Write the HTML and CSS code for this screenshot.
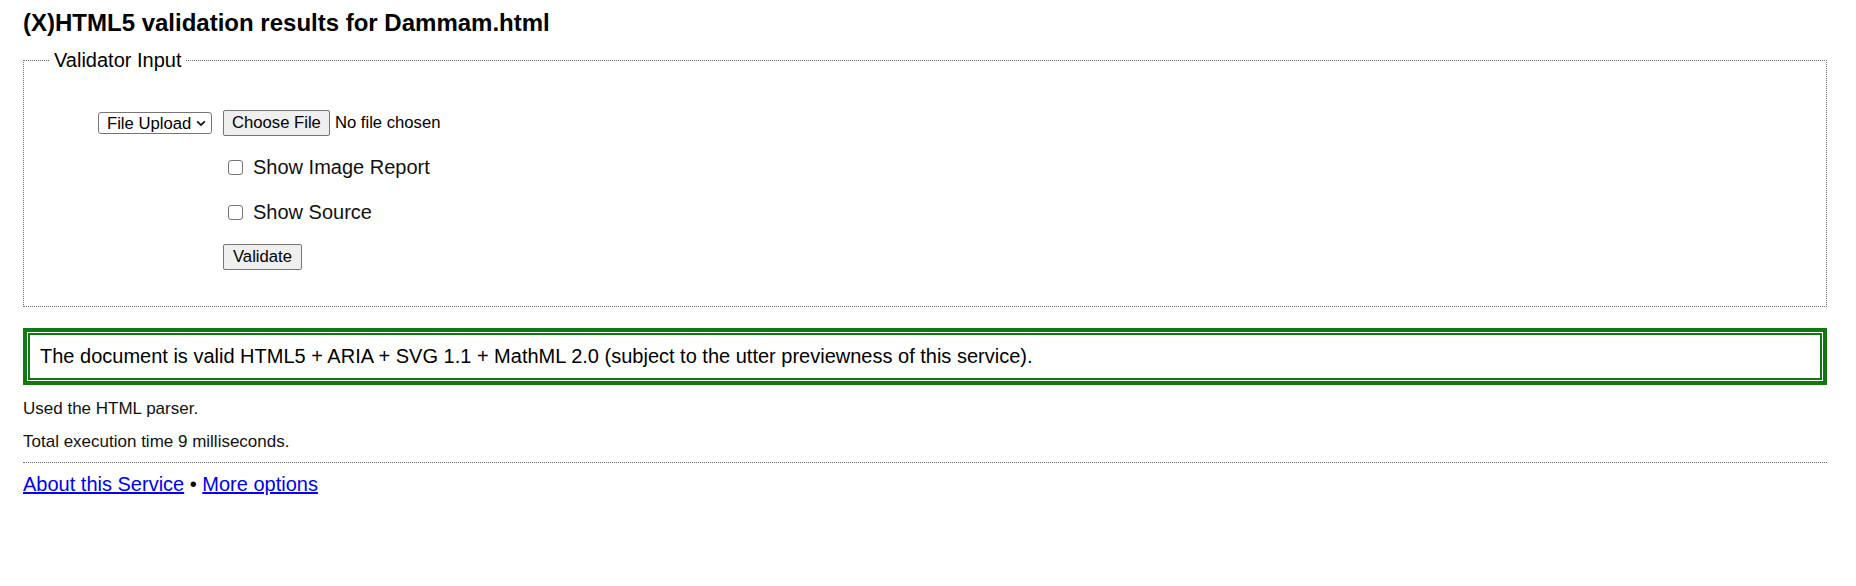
FILE: index.html
```html
<!DOCTYPE html>
<html lang="en">
<head>
<meta charset="utf-8">
<title>(X)HTML5 validation results for Dammam.html</title>
<link rel="stylesheet" href="styles.css">
</head>
<body>
<h1 class="title">(X)HTML5 validation results for Dammam.html</h1>
<form class="input-form">
  <fieldset class="fs">
    <legend class="fs-legend">Validator Input</legend>
    <div class="form-grid">
      <div class="cell-select">
        <span class="select">File Upload<svg class="chev" width="10" height="7" viewBox="0 0 10 7"><path d="M1.2 1.3 5 5.1 8.8 1.3" fill="none" stroke="#111" stroke-width="1.8"/></svg></span>
      </div>
      <div class="cell-file">
        <span class="btn">Choose File</span><span class="nofile">No file chosen</span>
      </div>
      <div class="cell-empty"></div>
      <label class="check"><span class="box"></span>Show Image Report</label>
      <div class="cell-empty"></div>
      <label class="check"><span class="box"></span>Show Source</label>
      <div class="cell-empty"></div>
      <div class="cell-btn"><span class="btn btn-validate">Validate</span></div>
    </div>
  </fieldset>
</form>
<div class="success">The document is valid HTML5 + ARIA + SVG 1.1 + MathML 2.0 (subject to the utter previewness of this service).</div>
<p class="info info-first">Used the HTML parser.</p>
<p class="info">Total execution time 9 milliseconds.</p>
<hr class="sep">
<p class="links"><a href="#">About this Service</a> • <a href="#">More options</a></p>
</body>
</html>
```
FILE: styles.css
```css
html, body {
  background: #fff;
}
body {
  margin: 0;
  padding: 9px 29px 0 23px;
  font-family: "Liberation Sans", Arial, sans-serif;
  color: #000;
}
.title {
  margin: 0;
  font-size: 24px;
  line-height: 27px;
  font-weight: bold;
}
.input-form {
  margin: 13px 0 0;
}
.fs {
  margin: 0;
  border: 1px dotted #6f6f6f;
  padding: 38px 0 36px 26px;
  min-width: 0;
}
.fs-legend {
  padding: 0 4px;
  font-size: 20px;
  line-height: 23px;
}
.form-grid {
  display: grid;
  grid-template-columns: 173px 1fr;
  grid-template-rows: 26px 27px 27px 26px;
  row-gap: 18px;
  align-items: center;
  font-size: 16.67px;
}
.cell-select {
  padding-left: 48px;
  display: flex;
  align-items: center;
}
.select {
  box-sizing: border-box;
  width: 114px;
  height: 22px;
  border: 1px solid #767676;
  border-radius: 3px;
  background: #fff;
  padding: 0 5px 0 8px;
  display: flex;
  align-items: center;
  justify-content: space-between;
  font-size: 16.67px;
  line-height: 19px;
}
.chev {
  display: block;
}
.cell-file, .cell-btn {
  display: flex;
  align-items: center;
}
.btn {
  box-sizing: border-box;
  height: 26px;
  padding: 0 8px;
  border: 1px solid #767676;
  border-radius: 2px;
  background: #efefef;
  display: inline-flex;
  align-items: center;
  font-size: 16.67px;
  color: #000;
}
.btn-validate {
  padding: 0 9px;
}
.nofile {
  margin-left: 5px;
}
.check {
  display: flex;
  align-items: center;
  font-size: 20px;
  line-height: 23px;
  color: #111;
}
.box {
  box-sizing: border-box;
  width: 15px;
  height: 15px;
  border: 1px solid #767676;
  border-radius: 3px;
  background: #fff;
  margin: 0 10px 0 5px;
}
.success {
  margin-top: 21px;
  border: 4px solid #127812;
  box-shadow: inset 0 0 0 1px #fff, inset 0 0 0 3px #127812;
  padding: 13px 13px;
  font-size: 20px;
  line-height: 23px;
}
.info {
  margin: 14px 0 0;
  font-size: 17px;
  line-height: 19px;
  color: #111;
}
.info-first {
  margin-top: 14px;
}
.sep {
  margin: 11px 0 0;
  border: 0;
  border-top: 1px dotted #6f6f6f;
  height: 0;
}
.links {
  margin: 10px 0 0;
  font-size: 20px;
  line-height: 23px;
}
.links a {
  color: #0000ee;
  text-decoration: underline;
}
```
